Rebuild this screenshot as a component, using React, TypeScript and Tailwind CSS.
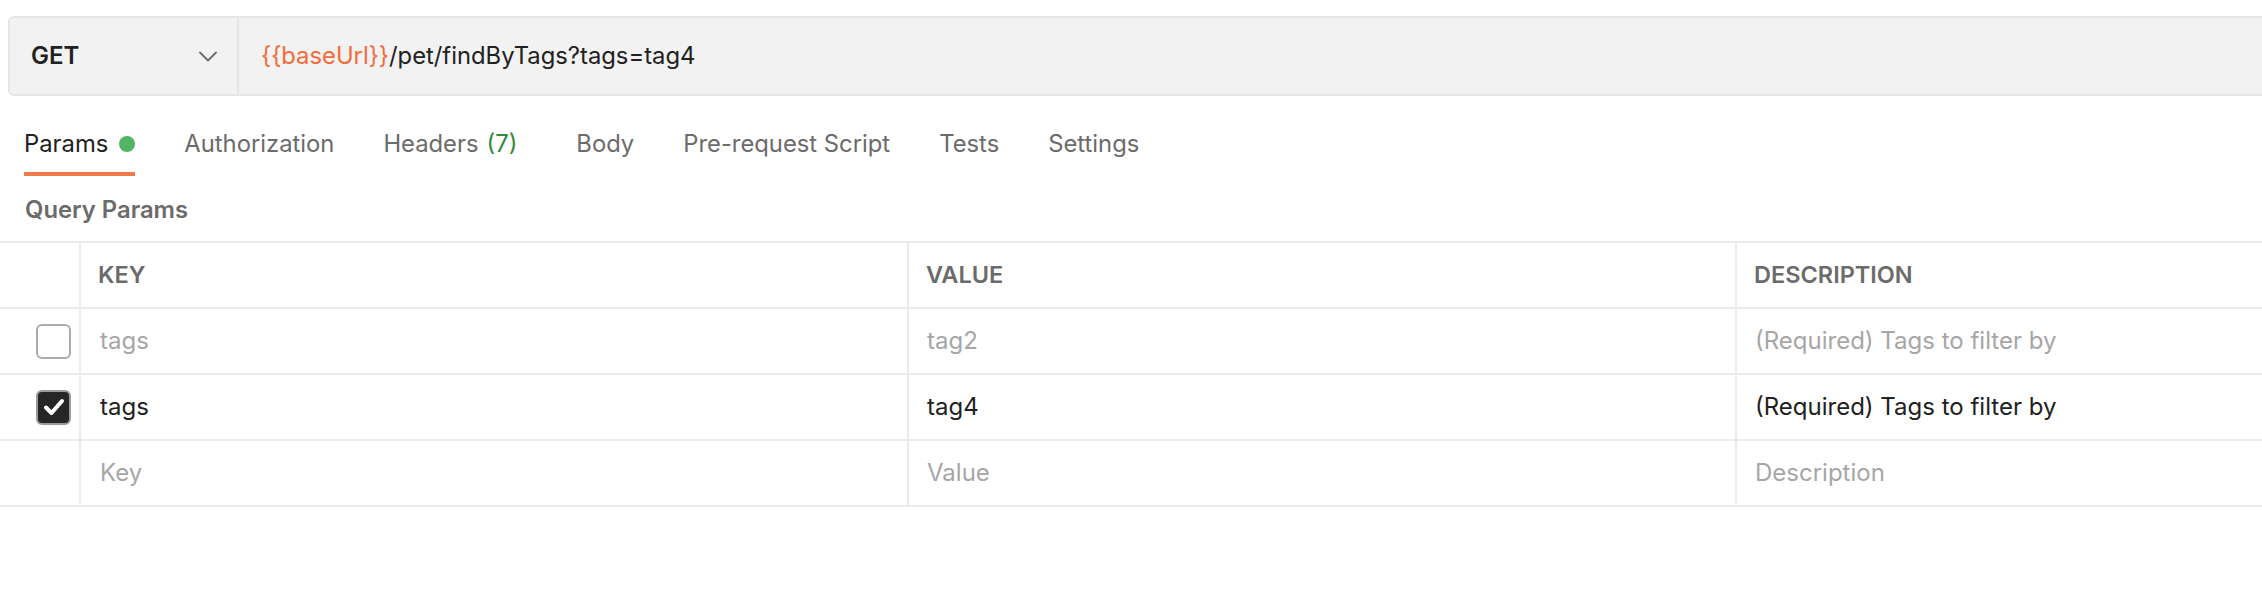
import React from 'react';

const tabs = [
  { title: 'Params', dot: true, active: true },
  { title: 'Authorization' },
  { title: 'Headers', count: '(7)' },
  { title: 'Body' },
  { title: 'Pre-request Script' },
  { title: 'Tests' },
  { title: 'Settings' },
];

const rows = [
  { key: 'tags', value: 'tag2', description: '(Required) Tags to filter by', checked: false },
  { key: 'tags', value: 'tag4', description: '(Required) Tags to filter by', checked: true },
];

const Checkbox = ({ checked }: { checked: boolean }) => {
  if (checked) {
    return (
      <div className="flex h-[35px] w-[35px] items-center justify-center rounded-[6px] border-2 border-[#9a9a9a] bg-[#262626]">
        <svg width="22" height="18" viewBox="0 0 22 18" fill="none">
          <path d="M3 9.5 L8.5 15 L19 3" stroke="#ffffff" strokeWidth="4" strokeLinecap="round" strokeLinejoin="round" />
        </svg>
      </div>
    );
  }
  return <div className="h-[35px] w-[35px] rounded-[6px] border-2 border-[#ababab] bg-white" />;
};

export default function App() {
  return (
    <div className="min-h-[604px] w-full overflow-hidden bg-white font-['Inter',sans-serif] text-[#212121]">
      <div className="pl-2 pt-4">
        <div className="flex h-[80px] items-stretch rounded-l-[6px] border-y-2 border-l-2 border-[#e6e6e6] bg-[#f2f2f2]">
          <div className="flex w-[229px] shrink-0 items-center justify-between border-r-2 border-[#e6e6e6] pl-[21px] pr-[20px]">
            <span className="text-[24px] font-semibold text-[#212121]">GET</span>
            <svg width="18" height="11" viewBox="0 0 18 11" fill="none">
              <path d="M1 1.5 L9 9.5 L17 1.5" stroke="#6b6b6b" strokeWidth="1.8" strokeLinecap="round" strokeLinejoin="round" />
            </svg>
          </div>
          <div className="flex items-center pl-[22px] text-[23.8px]">
            <span className="text-[#f26b3a]">{'{{baseUrl}}'}</span>
            <span>/pet/findByTags?tags=tag4</span>
          </div>
        </div>
      </div>

      <div className="flex gap-[49px] pl-[24px]">
        {tabs.map((tab) => (
          <div key={tab.title} className={`flex flex-col ${tab.count ? 'mr-[10px]' : ''}`}>
            <div className="mt-[32px] flex h-[32px] items-center text-[23.8px]">
              <span className={tab.active ? 'text-[#212121]' : 'text-[#6b6b6b]'}>{tab.title}</span>
              {tab.count && <span className="ml-[8px] text-[#2f8a3b]">{tab.count}</span>}
              {tab.dot && <span className="ml-[11px] h-4 w-4 rounded-full bg-[#52b564]" />}
            </div>
            <div className={`mt-[12px] h-[4px] ${tab.active ? 'bg-[#f07a4a]' : 'bg-transparent'}`} />
          </div>
        ))}
      </div>

      <div className="pl-[25px] pt-[20px] pb-[17px] text-[23.8px] font-semibold leading-[28px] text-[#6b6b6b]">
        Query Params
      </div>

      <div className="w-[2400px] border-t-2 border-[#ebebeb]">
        <div className="grid h-[66px] grid-cols-[81px_828px_828px_1fr] border-b-2 border-[#ebebeb] text-[23.5px] font-semibold text-[#6b6b6b]">
          <div className="border-r-2 border-[#ebebeb]" />
          <div className="flex items-center border-r-2 border-[#ebebeb] pl-[17px]">KEY</div>
          <div className="flex items-center border-r-2 border-[#ebebeb] pl-[17px]">VALUE</div>
          <div className="flex items-center pl-[17px]">DESCRIPTION</div>
        </div>
        {rows.map((row, i) => (
          <div
            key={i}
            className={`grid h-[66px] grid-cols-[81px_828px_828px_1fr] border-b-2 border-[#ebebeb] text-[24px] ${row.checked ? 'text-[#212121]' : 'text-[#a6a6a6]'}`}
          >
            <div className="flex items-center border-r-2 border-[#ebebeb] pl-[36px]">
              <Checkbox checked={row.checked} />
            </div>
            <div className="flex items-center border-r-2 border-[#ebebeb] pl-[19px]">{row.key}</div>
            <div className="flex items-center border-r-2 border-[#ebebeb] pl-[18px]">{row.value}</div>
            <div className="flex items-center pl-[18px]">{row.description}</div>
          </div>
        ))}
        <div className="grid h-[66px] grid-cols-[81px_828px_828px_1fr] border-b-2 border-[#ebebeb] text-[24px] text-[#a6a6a6]">
          <div className="border-r-2 border-[#ebebeb]" />
          <div className="flex items-center border-r-2 border-[#ebebeb] pl-[19px]">Key</div>
          <div className="flex items-center border-r-2 border-[#ebebeb] pl-[18px]">Value</div>
          <div className="flex items-center pl-[18px]">Description</div>
        </div>
      </div>
    </div>
  );
}
